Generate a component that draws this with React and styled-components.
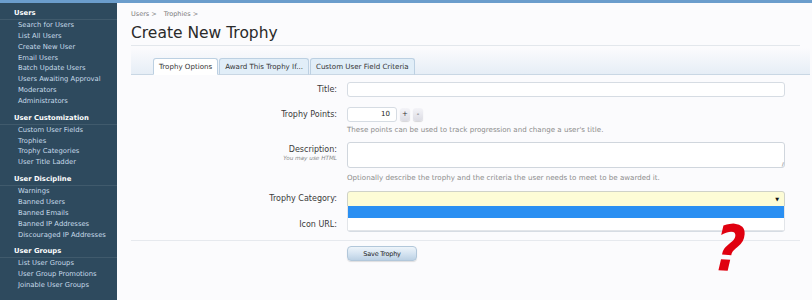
import React from 'react'
import { styled, createGlobalStyle } from 'styled-components'

const GlobalStyle = createGlobalStyle`
  html, body { margin: 0; padding: 0; }
  body {
    font-family: "DejaVu Sans", Verdana, sans-serif;
    background: #fbfbfd;
  }
  * { box-sizing: border-box; }
`

const sections = [
  { title: 'Users', links: ['Search for Users', 'List All Users', 'Create New User', 'Email Users', 'Batch Update Users', 'Users Awaiting Approval', 'Moderators', 'Administrators'] },
  { title: 'User Customization', links: ['Custom User Fields', 'Trophies', 'Trophy Categories', 'User Title Ladder'] },
  { title: 'User Discipline', links: ['Warnings', 'Banned Users', 'Banned Emails', 'Banned IP Addresses', 'Discouraged IP Addresses'] },
  { title: 'User Groups', links: ['List User Groups', 'User Group Promotions', 'Joinable User Groups'] },
]

const tabs = ['Trophy Options', 'Award This Trophy If...', 'Custom User Field Criteria']

const App = () => {
  return (
    <>
      <GlobalStyle />
      <Page>
        <TopStripe />
        <Body>
          <Sidebar>
            {sections.map((s) => (
              <Section key={s.title}>
                <SectionTitle>{s.title}</SectionTitle>
                {s.links.map((l) => (
                  <NavLink key={l}>{l}</NavLink>
                ))}
              </Section>
            ))}
          </Sidebar>
          <Main>
            <Breadcrumb>
              <span>Users &gt;</span>
              <span>Trophies &gt;</span>
            </Breadcrumb>
            <Title>Create New Trophy</Title>
            <TabStrip>
              {tabs.map((t, i) => (
                <Tab key={t} $active={i === 0}>{t}</Tab>
              ))}
            </TabStrip>
            <Form>
              <Row $space={10}>
                <Label>Title:</Label>
                <Field><TextInput /></Field>
              </Row>
              <Row $space={7}>
                <Label>Trophy Points:</Label>
                <Field>
                  <Spinner>
                    <NumberBox>10</NumberBox>
                    <SpinButton>+</SpinButton>
                    <SpinButton>-</SpinButton>
                  </Spinner>
                  <Hint>These points can be used to track progression and change a user's title.</Hint>
                </Field>
              </Row>
              <Row $space={8}>
                <Label>
                  Description:
                  <SubLabel>You may use HTML</SubLabel>
                </Label>
                <Field>
                  <TextArea>
                    <Grip>//</Grip>
                  </TextArea>
                  <Hint $gap={5}>Optionally describe the trophy and the criteria the user needs to meet to be awarded it.</Hint>
                </Field>
              </Row>
              <Row $space={10}>
                <Label>Trophy Category:</Label>
                <Field>
                  <Select>
                    <Arrow>▼</Arrow>
                    <DropList>
                      <Option $selected />
                      <Option />
                    </DropList>
                  </Select>
                </Field>
              </Row>
              <Row $space={8}>
                <Label>Icon URL:</Label>
                <Field><TextInput /></Field>
              </Row>
            </Form>
            <Actions>
              <SaveButton>Save Trophy</SaveButton>
            </Actions>
            <Mark>?</Mark>
          </Main>
        </Body>
      </Page>
    </>
  )
}

export default App

const Page = styled.div`
  width: 812px;
  height: 300px;
  overflow: hidden;
  display: flex;
  flex-direction: column;
`
const TopStripe = styled.div`
  height: 3px;
  background: #6b9dcc;
  flex-shrink: 0;
`
const Body = styled.div`
  flex: 1;
  display: flex;
`
const Sidebar = styled.div`
  width: 117px;
  flex-shrink: 0;
  background: #2e4a5e;
  padding-top: 5px;
`
const Section = styled.div`
  padding-bottom: 6px;
`
const SectionTitle = styled.div`
  height: 12px;
  line-height: 11px;
  padding-left: 14px;
  font-size: 6.8px;
  font-weight: bold;
  color: #ffffff;
  border-bottom: 1px solid rgba(255, 255, 255, 0.09);
`
const NavLink = styled.div`
  height: 10.85px;
  line-height: 10.85px;
  padding-left: 18px;
  font-size: 6.8px;
  color: #c7dbea;
  white-space: nowrap;
`
const Main = styled.div`
  flex: 1;
  position: relative;
  padding: 6px 2px 0 14px;
`
const Breadcrumb = styled.div`
  display: flex;
  gap: 7px;
  height: 10px;
  line-height: 10px;
  font-size: 6.5px;
  color: #7a7a7a;
`
const Title = styled.h1`
  margin: 4px 0 0;
  width: 669px;
  height: 23px;
  line-height: 20px;
  font-size: 15.5px;
  font-weight: normal;
  color: #2a2a2a;
  border-bottom: 1px solid #e3e7ec;
`
const TabStrip = styled.div`
  margin-top: 2px;
  width: 679px;
  height: 27px;
  display: flex;
  align-items: flex-end;
  padding-left: 22px;
  background: linear-gradient(to bottom, rgba(232, 239, 246, 0) 0%, #e6eef6 100%);
  border-bottom: 1px solid #c9d7e4;
`
const Tab = styled.div`
  height: 17px;
  line-height: 16px;
  padding: 0 5px;
  margin-bottom: -1px;
  margin-right: 1px;
  font-size: 7.1px;
  color: #333;
  white-space: nowrap;
  border: 1px solid #bcd0e2;
  border-bottom-color: ${(p) => (p.$active ? '#ffffff' : '#c9d7e4')};
  border-radius: 3px 3px 0 0;
  background: ${(p) => (p.$active ? '#ffffff' : '#e1eef8')};
`
const Form = styled.div`
  width: 669px;
  padding-top: 7px;
  border-bottom: 1px solid #e6e9ee;
`
const Row = styled.div`
  display: grid;
  grid-template-columns: 206px 438px;
  column-gap: 10px;
  margin-bottom: ${(p) => p.$space}px;
`
const Label = styled.div`
  padding-top: 3px;
  text-align: right;
  font-size: 8px;
  line-height: 10px;
  color: #3a3a3a;
`
const SubLabel = styled.div`
  font-size: 5.7px;
  line-height: 7px;
  font-style: italic;
  color: #8a8a8a;
`
const Field = styled.div`
  display: flex;
  flex-direction: column;
`
const TextInput = styled.div`
  height: 15px;
  background: #ffffff;
  border: 1px solid #d6dce3;
  border-radius: 3px;
`
const Spinner = styled.div`
  display: flex;
  align-items: center;
  gap: 3px;
`
const NumberBox = styled.div`
  width: 50px;
  height: 15px;
  padding-right: 6px;
  text-align: right;
  font-size: 7px;
  line-height: 13px;
  color: #222;
  background: #ffffff;
  border: 1px solid #d6dce3;
  border-radius: 3px;
`
const SpinButton = styled.div`
  width: 10px;
  height: 13px;
  text-align: center;
  font-size: 7px;
  line-height: 12px;
  color: #333;
  background: linear-gradient(to bottom, #f4f4f8, #dcdce4);
  border-radius: 3px;
  box-shadow: 0 1px 1px rgba(0, 0, 0, 0.15);
`
const Hint = styled.div`
  margin-top: ${(p) => p.$gap || 3}px;
  height: 10px;
  line-height: 10px;
  font-size: 7.1px;
  color: #8c8c8c;
  white-space: nowrap;
`
const TextArea = styled.div`
  position: relative;
  height: 26px;
  background: #ffffff;
  border: 1px solid #d0d6dd;
  border-radius: 3px;
`
const Grip = styled.span`
  position: absolute;
  right: 1px;
  bottom: 0;
  font-size: 5px;
  line-height: 5px;
  color: #999;
  letter-spacing: -1px;
`
const Select = styled.div`
  position: relative;
  height: 16px;
  background: #fdfcd6;
  border: 1px solid #cfd2c8;
  border-radius: 3px 3px 0 0;
`
const Arrow = styled.span`
  position: absolute;
  right: 5px;
  top: 4px;
  font-size: 5px;
  line-height: 6px;
  color: #111;
`
const DropList = styled.div`
  position: absolute;
  left: -1px;
  right: -1px;
  top: 100%;
  z-index: 2;
  background: #ffffff;
  border: 1px solid #e2e5e9;
  border-top: none;
  border-radius: 0 0 3px 3px;
`
const Option = styled.div`
  height: 12px;
  background: ${(p) => (p.$selected ? '#2a8ff2' : '#ffffff')};
`
const Actions = styled.div`
  padding: 5px 0 0 216px;
`
const SaveButton = styled.div`
  width: 70px;
  height: 15px;
  text-align: center;
  font-size: 6.5px;
  line-height: 14px;
  letter-spacing: -0.2px;
  color: #222;
  border: 1px solid #b2c7da;
  border-radius: 4px;
  background: linear-gradient(to bottom, #eef4fa 0%, #d3e2f0 55%, #bcd1e4 100%);
  box-shadow: 0 1px 1px rgba(0, 0, 0, 0.12);
`
const Mark = styled.div`
  position: absolute;
  z-index: 3;
  left: 600px;
  top: 211px;
  font-size: 64px;
  line-height: 68px;
  font-weight: bold;
  font-style: italic;
  color: #e0000f;
  transform: rotate(4deg) scaleX(0.82);
  transform-origin: left top;
`
